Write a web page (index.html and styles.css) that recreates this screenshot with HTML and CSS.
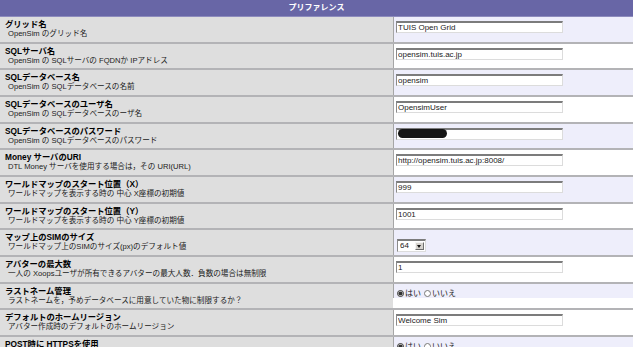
FILE: index.html
```html
<!DOCTYPE html>
<html lang="ja">
<head>
    <meta charset="UTF-8">
    <title>プリファレンス</title>
    <link rel="stylesheet" href="styles.css">
</head>
<body>
    <form class="prefs">
        <div class="prefs-head">プリファレンス</div>

        <div class="pref-row odd">
            <div class="pref-label"><b>グリッド名</b><span>OpenSim のグリッド名</span></div>
            <div class="pref-value"><input class="text-field" type="text" value="TUIS Open Grid"></div>
        </div>
        <div class="pref-row">
            <div class="pref-label"><b>SQLサーバ名</b><span>OpenSim の SQLサーバの FQDNか IPアドレス</span></div>
            <div class="pref-value"><input class="text-field" type="text" value="opensim.tuis.ac.jp"></div>
        </div>
        <div class="pref-row odd">
            <div class="pref-label"><b>SQLデータベース名</b><span>OpenSim の SQLデータベースの名前</span></div>
            <div class="pref-value"><input class="text-field" type="text" value="opensim"></div>
        </div>
        <div class="pref-row">
            <div class="pref-label"><b>SQLデータベースのユーザ名</b><span>OpenSim の SQLデータベースのーザ名</span></div>
            <div class="pref-value"><input class="text-field" type="text" value="OpensimUser"></div>
        </div>
        <div class="pref-row odd">
            <div class="pref-label"><b>SQLデータベースのパスワード</b><span>OpenSim の SQLデータベースのパスワード</span></div>
            <div class="pref-value">
                <span class="masked">
                    <input class="text-field" type="password" value="">
                    <span class="redact"></span>
                </span>
            </div>
        </div>
        <div class="pref-row">
            <div class="pref-label"><b>Money サーバのURI</b><span>DTL Money サーバを使用する場合は，その URI(URL)</span></div>
            <div class="pref-value"><input class="text-field" type="text" value="http://opensim.tuis.ac.jp:8008/"></div>
        </div>
        <div class="pref-row odd">
            <div class="pref-label"><b>ワールドマップのスタート位置（X）</b><span>ワールドマップを表示する時の 中心 X座標の初期値</span></div>
            <div class="pref-value"><input class="text-field" type="text" value="999"></div>
        </div>
        <div class="pref-row">
            <div class="pref-label"><b>ワールドマップのスタート位置（Y）</b><span>ワールドマップを表示する時の 中心 Y座標の初期値</span></div>
            <div class="pref-value"><input class="text-field" type="text" value="1001"></div>
        </div>
        <div class="pref-row odd">
            <div class="pref-label"><b>マップ上のSIMのサイズ</b><span>ワールドマップ上のSIMのサイズ(px)のデフォルト値</span></div>
            <div class="pref-value">
                <span class="select-box">
                    <select class="select-field">
                        <option>64</option>
                        <option>128</option>
                        <option>256</option>
                    </select>
                    <span class="select-arrow"></span>
                </span>
            </div>
        </div>
        <div class="pref-row">
            <div class="pref-label"><b>アバターの最大数</b><span>一人の Xoopsユーザが所有できるアバターの最大人数．負数の場合は無制限</span></div>
            <div class="pref-value"><input class="text-field" type="text" value="1"></div>
        </div>
        <div class="pref-row odd">
            <div class="pref-label"><b>ラストネーム管理</b><span>ラストネームを，予めデータベースに用意していた物に制限するか？</span></div>
            <div class="pref-value radios">
                <label><input type="radio" name="lastname" checked>はい</label>
                <label><input type="radio" name="lastname">いいえ</label>
            </div>
        </div>
        <div class="pref-row">
            <div class="pref-label"><b>デフォルトのホームリージョン</b><span>アバター作成時のデフォルトのホームリージョン</span></div>
            <div class="pref-value"><input class="text-field" type="text" value="Welcome Sim"></div>
        </div>
        <div class="pref-row odd">
            <div class="pref-label"><b>POST時に HTTPSを使用</b><span>ログインなどの POST時に HTTPSを使用するか？</span></div>
            <div class="pref-value radios">
                <label><input type="radio" name="https" checked>はい</label>
                <label><input type="radio" name="https">いいえ</label>
            </div>
        </div>
    </form>
</body>
</html>
```

FILE: styles.css
```css
body {
    margin: 0;
    background: #fff;
    font-family: "Liberation Sans", "Noto Sans CJK JP", sans-serif;
    overflow: hidden;
}

.prefs {
    margin: 0;
    width: 100%;
}

.prefs-head {
    height: 17px;
    box-sizing: border-box;
    background: #6866a6;
    border-bottom: 1px solid #8d8bbd;
    color: #fff;
    font-weight: bold;
    font-size: 8px;
    line-height: 16px;
    text-align: center;
}

.pref-row {
    display: grid;
    grid-template-columns: 393px 1fr;
    height: 26.67px;
    box-sizing: border-box;
    border-bottom: 2px solid #b3b3b6;
}

.pref-label {
    background: #dedede;
    padding: 3px 5px 0 5px;
    font-size: 8.3px;
    line-height: 9px;
    color: #000;
    white-space: nowrap;
    overflow: hidden;
}

.pref-label b {
    display: block;
    font-weight: bold;
}

.pref-label span {
    display: block;
    padding-left: 3px;
    font-size: 7.6px;
    line-height: 9px;
    color: #1a1a1a;
}

.pref-value {
    background: #fff;
    border-left: 1px solid #a6a6a6;
    padding: 4px 0 0 2px;
}

.pref-row.odd .pref-value {
    background: #eeeefb;
}

.text-field {
    display: block;
    width: 167px;
    height: 12px;
    box-sizing: border-box;
    margin: 0;
    padding: 0 1px;
    border-style: solid;
    border-width: 2px 1px 1px 1px;
    border-color: #7c7c7c #dcdcdc #dcdcdc #8a8a8a;
    background: #fff;
    font-family: "Liberation Sans", sans-serif;
    font-size: 8px;
    line-height: 9px;
    color: #222;
    outline: none;
}

.masked {
    display: block;
    position: relative;
    width: 167px;
}

.redact {
    position: absolute;
    left: 2px;
    top: 1px;
    width: 49px;
    height: 9px;
    border-radius: 5px;
    background: #151515;
}

.select-box {
    display: inline-block;
    position: relative;
    margin: 1px 0 0 1px;
}

.select-field {
    display: block;
    width: 29px;
    height: 13px;
    box-sizing: border-box;
    margin: 0;
    padding: 0 0 0 2px;
    border-style: solid;
    border-width: 2px 1px 1px 1px;
    border-color: #7c7c7c #dcdcdc #dcdcdc #8a8a8a;
    background: #fff;
    font-family: "Liberation Sans", sans-serif;
    font-size: 8px;
    color: #222;
    appearance: none;
    -webkit-appearance: none;
    border-radius: 0;
}

.select-arrow {
    position: absolute;
    right: 2px;
    top: 3px;
    width: 9px;
    height: 8px;
    box-sizing: border-box;
    background: #d6d3ce;
    border: 1px solid;
    border-color: #f4f4f4 #6f6f6f #6f6f6f #f4f4f4;
    pointer-events: none;
}

.select-arrow::after {
    content: "";
    position: absolute;
    left: 1px;
    top: 2px;
    border-left: 2.5px solid transparent;
    border-right: 2.5px solid transparent;
    border-top: 3px solid #111;
}

.radios {
    display: flex;
    align-items: center;
    align-self: start;
    gap: 3px;
    padding-top: 5px;
    padding-left: 3px;
    font-size: 8px;
    line-height: 9px;
    color: #222;
}

.radios label {
    display: flex;
    align-items: center;
}

.radios input {
    width: 7px;
    height: 7px;
    margin: 0 1px 0 0;
    accent-color: #333;
}
```
